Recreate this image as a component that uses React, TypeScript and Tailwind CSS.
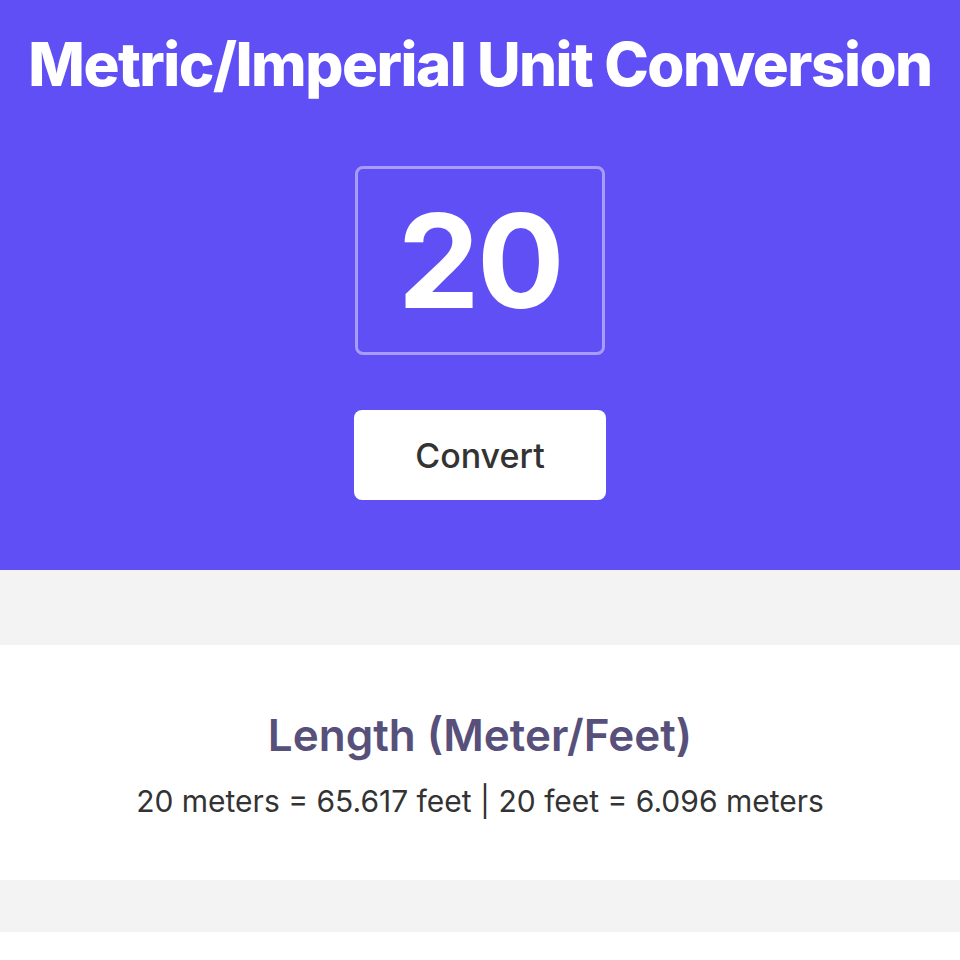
import React from "react";

export default function App() {
  return (
    <div className="min-h-screen bg-[#f3f3f3]" style={{ fontFamily: "Inter, 'Noto Sans', sans-serif" }}>
      <header className="bg-[#604ff5] h-[570px] flex flex-col items-center pt-[24px]">
        <h1 className="text-white text-[60px] font-extrabold tracking-[-0.025em] leading-[80px]">
          Metric/Imperial Unit Conversion
        </h1>
        <div className="mt-[62px] w-[250px] h-[189px] border-[3px] border-[#a99cf8] rounded-[8px] flex items-center justify-center">
          <span className="text-white text-[130px] font-bold leading-none tracking-[-0.02em]">20</span>
        </div>
        <button className="mt-[55px] w-[252px] h-[90px] bg-white rounded-[8px] text-[#333333] text-[34px] font-medium">
          Convert
        </button>
      </header>
      <div className="h-[75px]" />
      <section className="bg-white h-[235px] flex flex-col items-center pt-[65px]">
        <h2 className="text-[#57507a] text-[44px] font-semibold leading-[50px]">Length (Meter/Feet)</h2>
        <p className="text-[#333333] text-[30px] leading-[40px] mt-[21px]">
          20 meters = 65.617 feet | 20 feet = 6.096 meters
        </p>
      </section>
      <div className="h-[52px]" />
      <section className="bg-white h-[235px]" />
    </div>
  );
}
